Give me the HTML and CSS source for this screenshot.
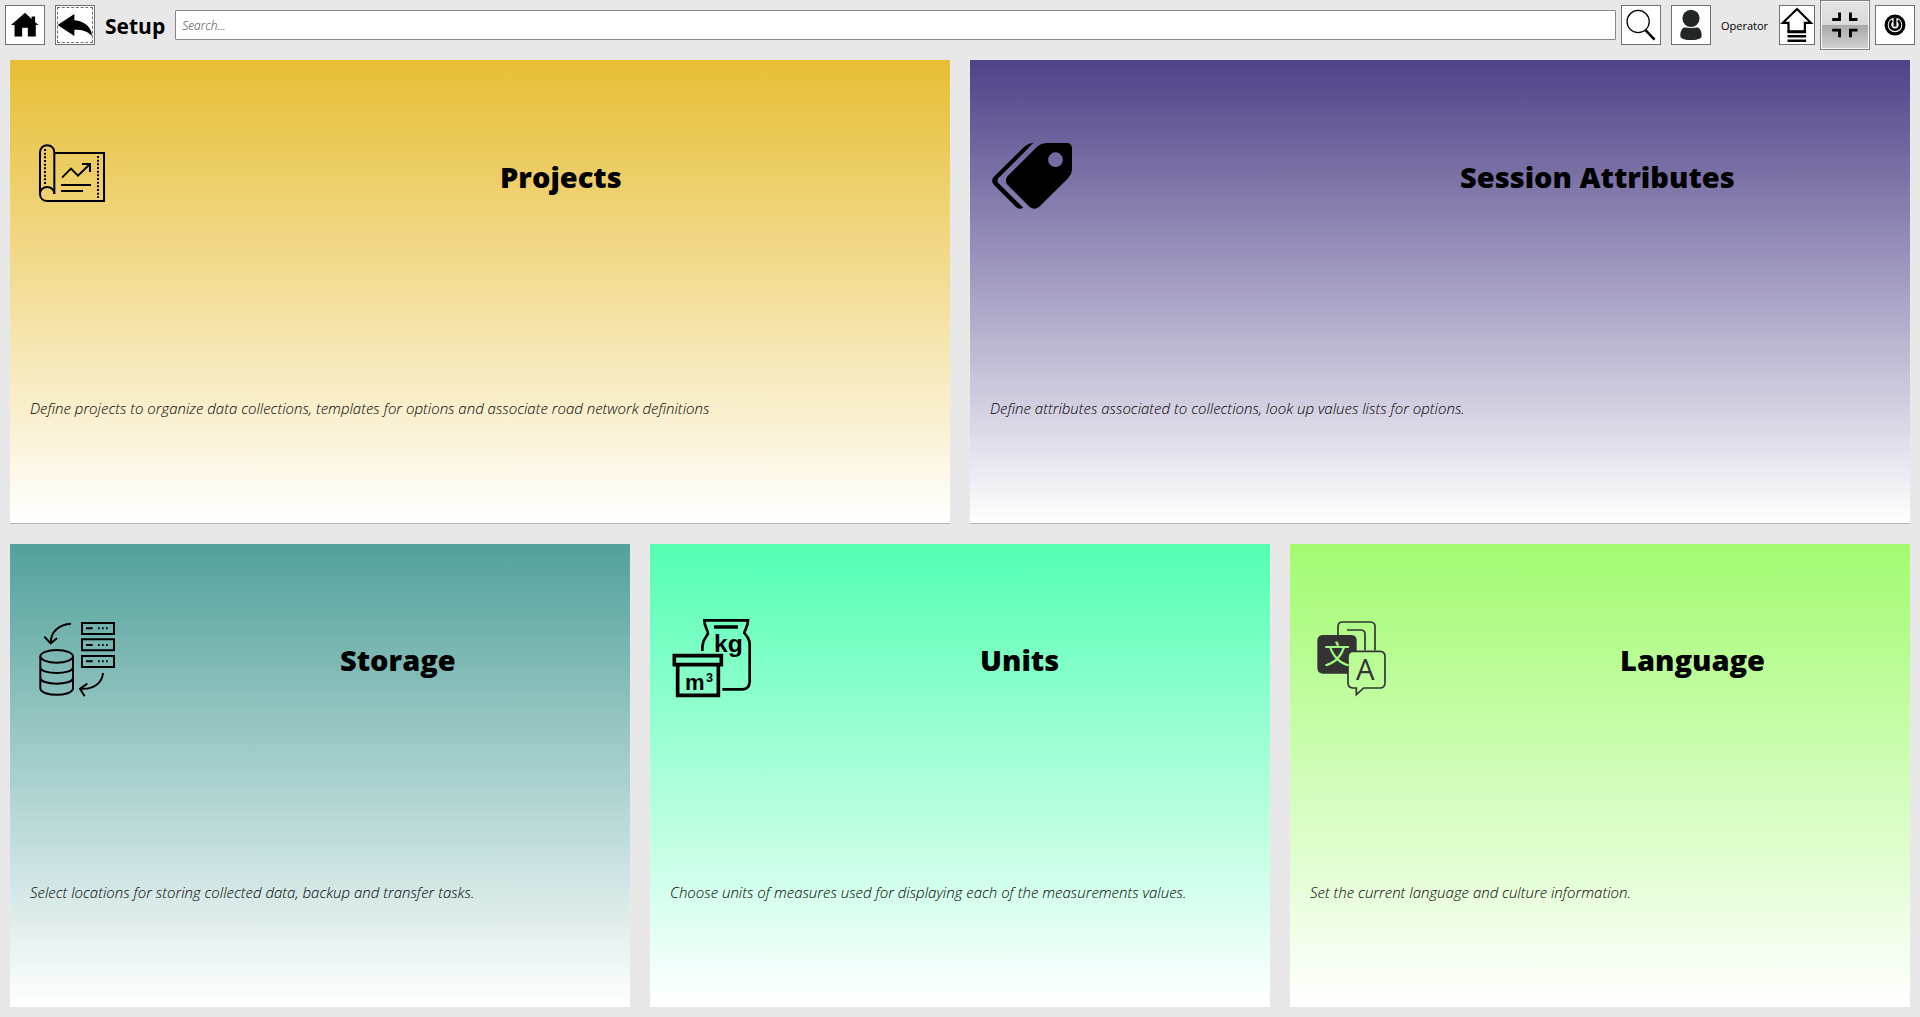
FILE: index.html
```html
<!DOCTYPE html>
<html lang="en">
<head>
<meta charset="utf-8">
<title>Setup</title>
<link rel="stylesheet" href="styles.css">
</head>
<body>
<header class="toolbar">
  <button class="tool" type="button" aria-label="Home">
    <svg viewBox="0 0 120 120"><path d="M60 21 L81 41 V33 H92 V51 L103 60 H94 V96 H69 V69 H51 V96 H27 V60 H16 Z"/></svg>
  </button>
  <button class="tool tool-back" type="button" aria-label="Back">
    <svg viewBox="0 0 120 120"><path d="M5 60 L58 25 V45 C90 48 112 65 114 95 C98 78 82 75 58 75 V95 Z"/></svg>
  </button>
  <h1 class="page-title">Setup</h1>
  <input class="search" type="text" placeholder="Search..." aria-label="Search">
  <button class="tool tool-search" type="button" aria-label="Run search">
    <svg viewBox="0 0 120 120"><circle cx="51" cy="49" r="35" fill="none" stroke="#000" stroke-width="4"/><path d="M74 76 L103 106" stroke="#000" stroke-width="8"/></svg>
  </button>
  <button class="tool tool-user" type="button" aria-label="User">
    <svg viewBox="0 0 120 120" fill="#222626"><circle cx="60" cy="39" r="27"/><path d="M38 68 Q60 71 82 68 C92 74 95 88 93 98 C87 111 33 111 27 98 C25 88 28 74 38 68 Z"/></svg>
  </button>
  <span class="user-name">Operator</span>
  <button class="tool tool-up" type="button" aria-label="Upload">
    <svg viewBox="0 0 108 120"><path d="M54 9 L98 53 H79 V80 H27 V53 H9 Z" fill="none" stroke="#000" stroke-width="7"/><path d="M24 82 H83 M24 96 H83 M24 110 H83" stroke="#000" stroke-width="8"/></svg>
  </button>
  <button class="tool tool-collapse" type="button" aria-label="Exit full screen">
    <svg viewBox="0 0 150 150" fill="none" stroke="#000" stroke-width="9"><path d="M58 36 V58 H35 M92 36 V58 H114 M58 113 V91 H35 M92 113 V91 H114"/></svg>
  </button>
  <button class="tool tool-power" type="button" aria-label="Power">
    <svg viewBox="0 0 120 120" fill="none" stroke="#000"><circle cx="60" cy="60" r="28" stroke-width="10"/><path d="M51 46 A16 16 0 1 0 69 46" stroke-width="8"/><path d="M60 38 V65" stroke-width="9"/></svg>
  </button>
</header>

<main class="tiles">
  <a class="tile tile-wide tile-projects" href="#projects">
    <svg class="tile-icon" viewBox="0 0 300 300" fill="none" stroke="#000" stroke-width="6">
      <path d="M103 204 V80 C103 50 60 50 60 80 V204 C60 218 70 225 82 225 H252 V81 H103"/>
      <path d="M60 204 C60 176 103 176 103 204"/>
      <path d="M75 69 V174 M234 90 V216" stroke-dasharray="6 5"/>
      <path d="M126 155 L153 128 L174 149 L210 114 M186 114 H210 V138 M123 177 H213 M123 195 H189"/>
    </svg>
    <h2 class="tile-title">Projects</h2>
    <p class="tile-text">Define projects to organize data collections, templates for options and associate road network definitions</p>
  </a>
  <a class="tile tile-wide tile-attributes" href="#attributes">
    <svg class="tile-icon" viewBox="0 0 300 300">
      <path fill-rule="evenodd" d="M198 51 H262 Q276 53 276 68 V132 Q275 145 265 156 L177 243 Q163 253 149 243 L83 177 Q72 163 83 150 L173 61 Q183 52 198 51 Z M226 79 a22 22 0 1 0 1 0 Z"/>
      <path d="M162 51 Q145 51 132 63 L43 151 Q29 163 43 178 L108 243 Q117 252 130 245 L55 171 Q50 163 55 157 L149 62 Q154 55 162 51 Z"/>
    </svg>
    <h2 class="tile-title">Session Attributes</h2>
    <p class="tile-text">Define attributes associated to collections, look up values lists for options.</p>
  </a>
  <a class="tile tile-storage" href="#storage">
    <svg class="tile-icon" viewBox="0 0 300 300" fill="none" stroke="#000" stroke-width="6">
      <ellipse cx="110" cy="142" rx="49" ry="19"/>
      <path d="M61 142 V238 C64 264 156 264 159 238 V142 M61 175 C64 198 156 198 159 175 M61 207 C64 230 156 230 159 207"/>
      <path d="M186 42 H282 V75 H186 Z M186 91 H282 V124 H186 Z M186 141 H282 V174 H186 Z"/>
      <path d="M198 58 H218 M234 58 h5 m7 0 h5 m7 0 h5 M198 108 H218 M234 108 h5 m7 0 h5 m7 0 h5 M198 157 H218 M234 157 h5 m7 0 h5 m7 0 h5"/>
      <path d="M153 44 C118 46 92 68 92 102 M73 83 L92 103 L111 88 M249 192 C247 222 220 242 182 239 M202 224 L180 239 L194 262"/>
    </svg>
    <h2 class="tile-title">Storage</h2>
    <p class="tile-text">Select locations for storing collected data, backup and transfer tasks.</p>
  </a>
  <a class="tile tile-units" href="#units">
    <svg class="tile-icon" viewBox="0 0 300 300" fill="none" stroke="#000" stroke-width="8">
      <path d="M127 126 C126 100 132 92 144 74 C144 62 133 54 133 34 H264 C264 54 254 62 253 72 C264 85 269 92 269 106 V218 Q268 240 248 241 H187"/>
      <path d="M162 54 H234 M43 140 H184 V167 H43 Z M53 168 V259 H175 V168" stroke-width="11"/>
      <text class="icon-label" x="162" y="129" font-size="74">kg</text>
      <text class="icon-label" x="75" y="242" font-size="66">m</text>
      <text class="icon-label" x="138" y="218" font-size="38">3</text>
    </svg>
    <h2 class="tile-title">Units</h2>
    <p class="tile-text">Choose units of measures used for displaying each of the measurements values.</p>
  </a>
  <a class="tile tile-language" href="#language">
    <svg class="tile-icon" viewBox="0 0 300 300" fill="none" stroke="#333" stroke-width="5">
      <path d="M114 78 V50 Q116 39 127 39 H212 Q224 40 225 51 V124 M141 63 H184 Q195 64 195 75 V124"/>
      <path d="M68 78 H154 Q170 79 170 94 V126 H158 Q144 127 144 142 V194 H68 Q52 192 52 178 V94 Q53 79 68 78 Z" fill="#333" stroke="none"/>
      <path d="M158 127 H240 Q255 128 255 142 V222 Q254 237 240 237 H191 L169 257 V237 H158 Q144 236 144 222 V142 Q145 128 158 127 Z"/>
      <text class="icon-han" x="72" y="166" font-size="78">文</text>
      <text class="icon-latin" x="168" y="213" font-size="88">A</text>
    </svg>
    <h2 class="tile-title">Language</h2>
    <p class="tile-text">Set the current language and culture information.</p>
  </a>
</main>
</body>
</html>
```
FILE: styles.css
```css
* {
  box-sizing: border-box;
}

body {
  display: flex;
  flex-direction: column;
  min-height: 100vh;
  margin: 0;
  background: #e8e8e8;
  color: #000;
  font-family: "Open Sans", "Noto Sans", sans-serif;
}

.toolbar {
  display: flex;
  align-items: center;
  height: 50px;
  padding: 0 5px;
}

.tool {
  flex: none;
  width: 40px;
  height: 40px;
  padding: 0;
  border: 1px solid #707070;
  background: #fff;
}

.tool svg {
  display: block;
  width: 100%;
  height: 100%;
}

.tool-back {
  margin-left: 10px;
  outline: 1px dashed #707070;
  outline-offset: -3px;
}

.page-title {
  margin: 0 10px;
  padding-top: 2px;
  font-size: 21px;
  line-height: 28px;
  font-weight: 700;
}

.search {
  flex: 1;
  min-width: 0;
  height: 30px;
  padding: 0 6px;
  border: 1px solid #828790;
  border-radius: 1px;
  background: #fff;
  font: italic 300 12px "Open Sans", "Noto Sans", sans-serif;
}

.search::placeholder {
  color: #404040;
}

.tool-search {
  margin-left: 5px;
}

.tool-user {
  margin: 0 10px;
}

.user-name {
  min-width: 48px;
  padding-top: 2px;
  font-size: 11px;
  line-height: 16px;
}

.tool-up {
  width: 36px;
  margin-left: 10px;
}

.tool-collapse {
  width: 50px;
  height: 50px;
  margin: 0 5px;
  border-color: #828282;
  background: linear-gradient(#e4e4e6, #d9d9dc 50%, #a8a8a8 50%, #d2d2d2);
  box-shadow: inset 0 0 0 1px #f4f4f4;
}

.tiles {
  flex: 1;
  display: grid;
  grid-template-columns: repeat(6, 1fr);
  grid-auto-rows: 1fr;
  gap: 20px;
  padding: 10px;
}

.tile {
  grid-column: span 2;
  display: grid;
  grid-template-columns: 1fr 1fr;
  grid-template-rows: 1fr 1fr;
  align-items: center;
  color: #000;
  text-decoration: none;
}

.tile-wide {
  grid-column: span 3;
  border-bottom: 1px solid #b4b4b4;
}

.tile-projects {
  background: linear-gradient(#e7be34, #fff);
}

.tile-attributes {
  background: linear-gradient(#504288, #fff);
}

.tile-storage {
  background: linear-gradient(#52a19b, #fff);
}

.tile-units {
  background: linear-gradient(#53ffb3, #fff);
}

.tile-language {
  background: linear-gradient(#a2fb70, #fff);
}

.tile-icon {
  width: 100px;
  height: 100px;
  margin-left: 10px;
}

.tile-title {
  margin: 0;
  padding: 2px 0 0 20px;
  font-size: 29px;
  line-height: 40px;
  font-weight: 800;
}

.tile-text {
  grid-column: span 2;
  margin: 0;
  padding: 2px 20px 0;
  font-size: 15px;
  line-height: 20px;
  font-weight: 300;
  font-style: italic;
}

.icon-label,
.icon-han,
.icon-latin {
  stroke: none;
}

.icon-label {
  fill: #000;
  font-family: "Liberation Sans", sans-serif;
  font-weight: 700;
}

.icon-han {
  fill: #a2fb82;
  font-family: "Noto Sans CJK SC", sans-serif;
  font-weight: 400;
}

.icon-latin {
  fill: #333;
  font-family: "Open Sans", sans-serif;
}
```
